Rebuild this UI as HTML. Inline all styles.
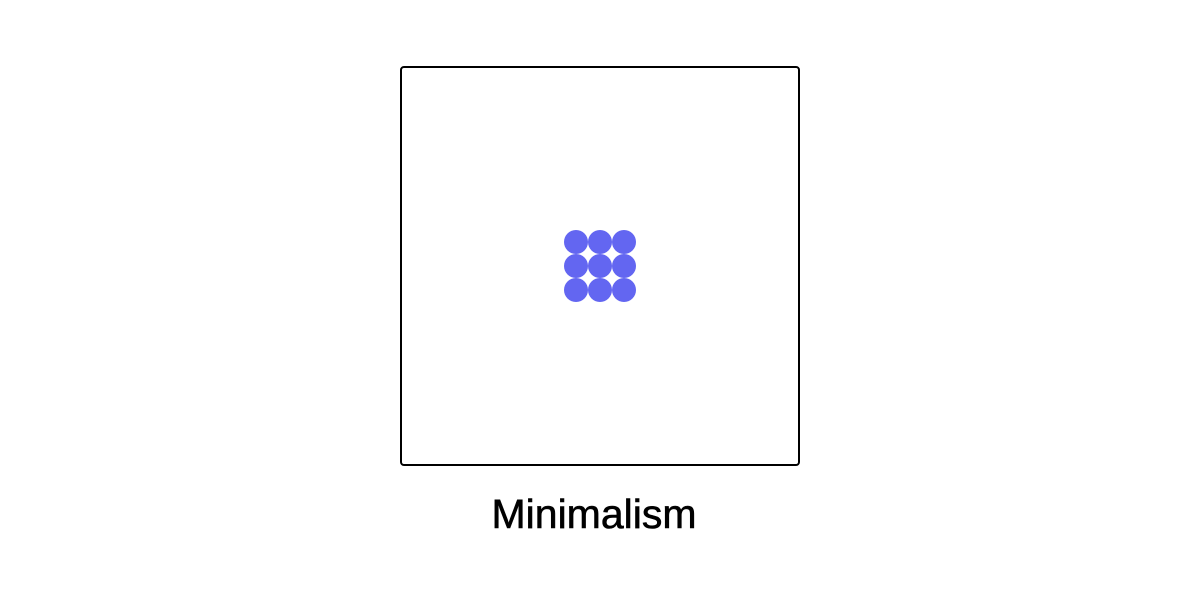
<!DOCTYPE html>
<html><head><style>
body{margin:0;width:1200px;height:600px;background:#fff;position:relative;overflow:hidden}
.box{position:absolute;left:400px;top:66px;width:396px;height:396px;border:2px solid #000;border-radius:4px}
.d{position:absolute;width:24px;height:24px;border-radius:50%;background:#6366f1}
.t{position:absolute;left:-6px;width:1200px;top:488px;text-align:center;font-family:"Liberation Sans",sans-serif;font-size:41px;line-height:52px;color:#000;-webkit-text-stroke:0.6px #000}
</style></head><body>
<div class="box"></div>
<div class="d" style="left:564px;top:230px"></div>
<div class="d" style="left:588px;top:230px"></div>
<div class="d" style="left:612px;top:230px"></div>
<div class="d" style="left:564px;top:254px"></div>
<div class="d" style="left:588px;top:254px"></div>
<div class="d" style="left:612px;top:254px"></div>
<div class="d" style="left:564px;top:278px"></div>
<div class="d" style="left:588px;top:278px"></div>
<div class="d" style="left:612px;top:278px"></div>
<div class="t">Minimalism</div>
</body></html>
